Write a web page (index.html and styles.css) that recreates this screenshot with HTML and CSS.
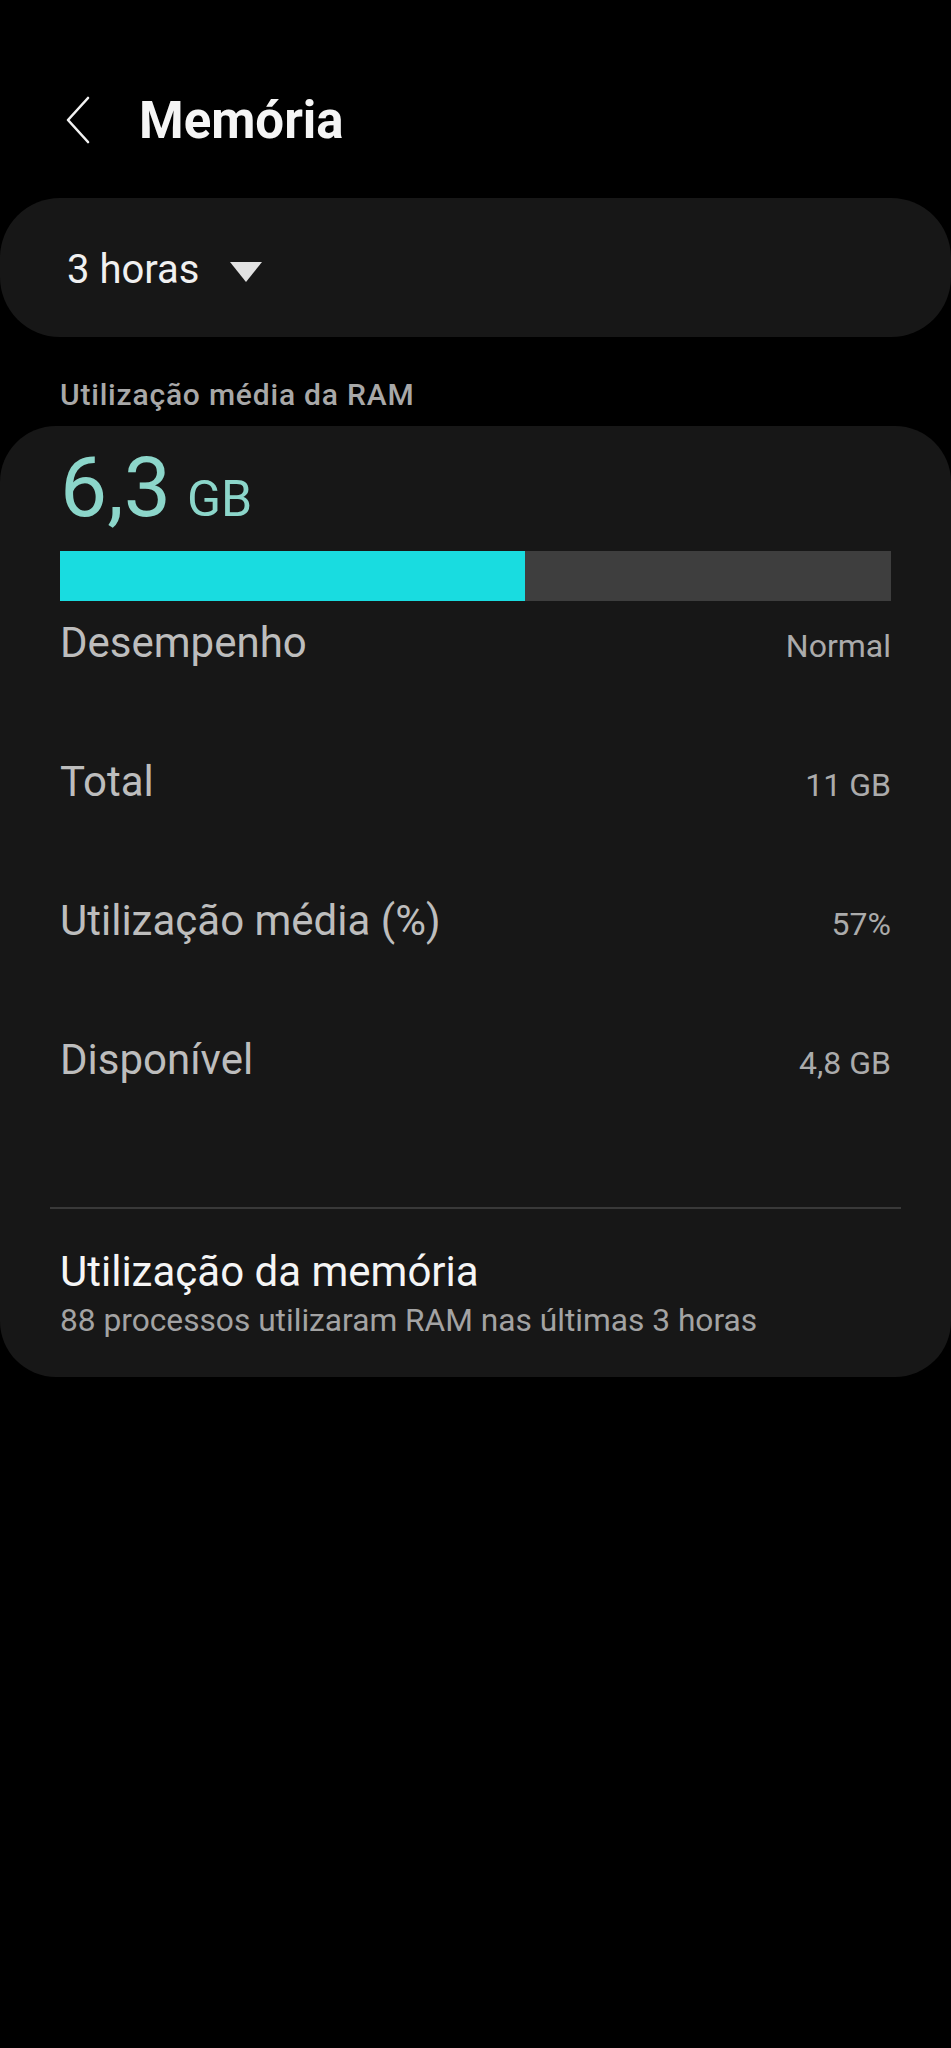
FILE: index.html
```html
<!DOCTYPE html>
<html lang="pt">
<head>
  <meta charset="UTF-8">
  <meta name="viewport" content="width=device-width, initial-scale=1.0">
  <title>Memória</title>
  <link rel="stylesheet" href="styles.css">
</head>
<body>
  <header class="top-bar">
    <svg class="back" width="26" height="48" viewBox="0 0 26 48">
      <path d="M23 2 L3 24 L23 46" fill="none" stroke="#f2f2f2" stroke-width="2.6" stroke-linecap="round" stroke-linejoin="round"/>
    </svg>
    <h1>Memória</h1>
  </header>

  <div class="period">
    <span>3 horas</span>
    <svg class="caret" width="34" height="20" viewBox="0 0 34 20">
      <path d="M1 0 H33 L17 20 Z" fill="#e2e2e2"/>
    </svg>
  </div>

  <div class="section-label">Utilização média da RAM</div>

  <div class="card">
    <div class="usage"><span class="num">6,3</span><span class="unit">GB</span></div>
    <div class="bar"><div class="bar-fill" style="width: 56%"></div></div>

    <div class="row"><span class="key">Desempenho</span><span class="val">Normal</span></div>
    <div class="row"><span class="key">Total</span><span class="val">11 GB</span></div>
    <div class="row"><span class="key">Utilização média (%)</span><span class="val">57%</span></div>
    <div class="row"><span class="key">Disponível</span><span class="val">4,8 GB</span></div>

    <hr class="divider">

    <div class="link-item">
      <div class="link-title">Utilização da memória</div>
      <div class="link-sub">88 processos utilizaram RAM nas últimas 3 horas</div>
    </div>
  </div>
</body>
</html>
```

FILE: styles.css
```css
body {
  margin: 0;
  background-color: #000000;
  color: #f2f2f2;
  font-family: Roboto, "Noto Sans", sans-serif;
}

.top-bar {
  display: flex;
  align-items: center;
  height: 100px;
  margin-top: 70px;
  padding-left: 65px;
}

.top-bar .back {
  display: block;
}

.top-bar h1 {
  margin: 0 0 0 48px;
  font-size: 51px;
  font-weight: 700;
  color: #f5f5f5;
}

.period {
  display: flex;
  align-items: center;
  height: 139px;
  margin-top: 28px;
  padding-left: 67px;
  background-color: #171717;
  border-radius: 60px;
  font-size: 40px;
  color: #f0f0f0;
}

.period span {
  margin-top: 4px;
}

.period .caret {
  margin-left: 30px;
  margin-top: 8px;
}

.section-label {
  margin: 41px 0 14px 60px;
  font-size: 30px;
  line-height: 34px;
  letter-spacing: 0.8px;
  font-weight: 500;
  color: #a8a8a8;
}

.card {
  background-color: #171717;
  border-radius: 56px;
  padding: 19px 60px 36px 60px;
}

.usage {
  height: 86px;
  line-height: 86px;
  color: #8cd6ca;
}

.usage .num {
  font-size: 84px;
}

.usage .unit {
  margin-left: 16px;
  font-size: 50px;
}

.bar {
  height: 50px;
  margin-top: 20px;
  background-color: #3e3e3e;
}

.bar-fill {
  height: 100%;
  background-color: #19dce0;
}

.row {
  display: flex;
  justify-content: space-between;
  align-items: baseline;
  height: 56px;
  line-height: 56px;
  margin-top: 83px;
}

.bar + .row {
  margin-top: 14px;
}

.row .key {
  font-size: 42px;
  color: #bdbdbd;
}

.row .val {
  font-size: 32px;
  color: #ababab;
}

.divider {
  margin: 119px -10px 0 -10px;
  border: 0;
  height: 2px;
  background-color: #393939;
}

.link-item {
  padding-top: 40px;
}

.link-title {
  font-size: 42px;
  line-height: 46px;
  color: #f5f5f5;
}

.link-sub {
  margin-top: 6px;
  font-size: 31.7px;
  line-height: 40px;
  color: #a3a3a3;
}
```
